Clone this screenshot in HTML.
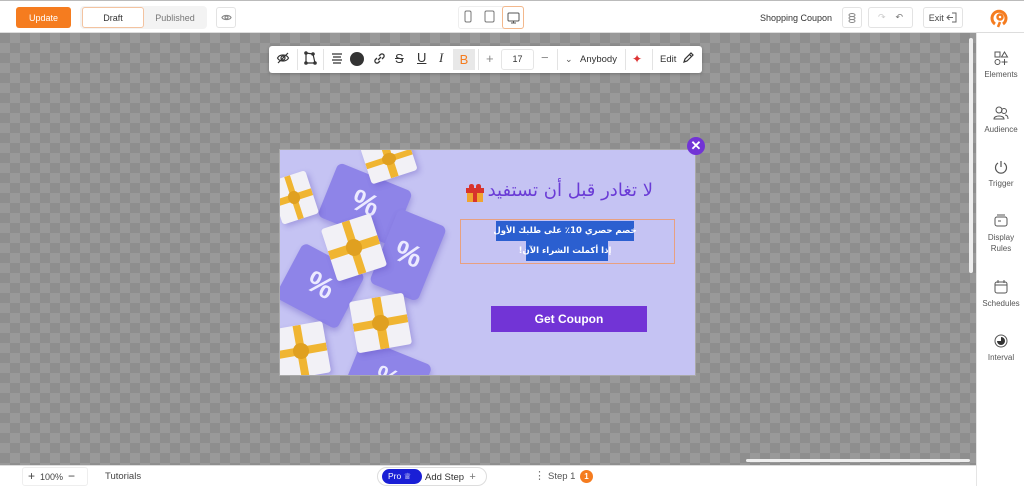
<!DOCTYPE html>
<html><head><meta charset="utf-8">
<style>
*{box-sizing:border-box;margin:0;padding:0}
body{width:1024px;height:486px;overflow:hidden;font-family:"Liberation Sans","Noto Sans CJK SC",sans-serif;background:#fff;position:relative;color:#333}
.abs{position:absolute}
.top{left:0;top:0;width:1024px;height:33px;background:#fff;border-top:1px solid #bbb;border-bottom:1px solid #ddd}
.btn{position:absolute;font-size:9px;display:flex;align-items:center;justify-content:center}
.canvas{left:0;top:33px;width:976px;height:432px;background-color:#8e8e8e;
background-image:linear-gradient(45deg,#999 25%,transparent 25%,transparent 75%,#999 75%),linear-gradient(45deg,#999 25%,transparent 25%,transparent 75%,#999 75%);
background-size:20px 20px;background-position:0 0,10px 10px}
.side{left:976px;top:33px;width:48px;height:453px;background:#fff;border-left:1px solid #e5e5e5}
.si{position:absolute;left:0;width:48px;text-align:center;font-size:8px;color:#555;line-height:11px}
.bot{left:0;top:465px;width:976px;height:21px;background:#fff;border-top:1px solid #ddd}
.tb{left:269px;top:46px;width:433px;height:27px;background:#fff;border-radius:3px;box-shadow:0 1px 3px rgba(0,0,0,.25)}
.sep{position:absolute;top:3px;width:1px;height:21px;background:#e3e3e3}
.ti{position:absolute;top:6px;font-size:11px;color:#333}
.pop{left:279px;top:149px;width:417px;height:227px;background:#c5c3f3;overflow:hidden;border:1px solid #aaa}
.cp{position:absolute;background:#8e84e8;border-radius:6px;color:#eceaff;font-weight:bold;display:flex;align-items:center;justify-content:center;box-shadow:2px 3px 6px rgba(80,60,180,.3)}
.gf{position:absolute;background:#f2f1f6;border-radius:3px;box-shadow:2px 3px 6px rgba(80,60,180,.3);overflow:hidden}
.gf:before{content:"";position:absolute;left:42%;top:0;width:16%;height:100%;background:#f0b532}
.gf:after{content:"";position:absolute;top:42%;left:0;height:16%;width:100%;background:#f0b532}
.gf i{position:absolute;left:35%;top:35%;width:30%;height:30%;background:#e0a020;border-radius:50%;z-index:2}
</style></head><body>
<div class="abs top">
  <div class="btn" style="left:16px;top:6px;width:55px;height:21px;background:#f57c1f;color:#fff;border-radius:3px">Update</div>
  <div class="btn" style="left:80px;top:5px;width:127px;height:23px;background:#f3f3f3;border-radius:4px"></div>
  <div class="btn" style="left:82px;top:6px;width:62px;height:21px;background:#fff;border:1px solid #f3c3a0;border-radius:3px;color:#333">Draft</div>
  <div class="btn" style="left:145px;top:6px;width:60px;height:21px;color:#777">Published</div>
  <div class="btn" style="left:216px;top:6px;width:20px;height:21px;border:1px solid #e3e3e3;border-radius:3px"><svg width="11" height="11" viewBox="0 0 12 12" fill="none" stroke="#888" stroke-width="1.2"><path d="M1 6c1.5-3 8.5-3 10 0c-1.5 3-8.5 3-10 0z"/><circle cx="6" cy="6" r="1.6"/></svg></div>
  <div class="btn" style="left:458px;top:5px;width:66px;height:23px;border:1px solid #eee;border-radius:3px"></div>
  <div class="btn" style="left:463px;top:8px;width:10px;height:15px"><svg width="8" height="13"><rect x="1" y="1" width="6" height="11" rx="1.5" fill="none" stroke="#777"/></svg></div>
  <div class="btn" style="left:483px;top:8px;width:12px;height:15px"><svg width="11" height="13"><rect x="1" y="1" width="9" height="11" rx="1.5" fill="none" stroke="#777"/></svg></div>
  <div class="btn" style="left:502px;top:5px;width:22px;height:23px;border:1px solid #f3b88c;border-radius:3px"><svg width="13" height="12"><rect x="1" y="1" width="11" height="8" rx="1" fill="none" stroke="#555"/><path d="M6.5 9v2M4 11h5" stroke="#555"/></svg></div>
  <div class="btn" style="left:756px;top:6px;width:80px;height:21px;color:#333">Shopping Coupon</div>
  <div class="btn" style="left:842px;top:6px;width:20px;height:21px;border:1px solid #e3e3e3;border-radius:3px"><svg width="10" height="12" fill="none" stroke="#888"><ellipse cx="5" cy="3" rx="3" ry="1.5"/><ellipse cx="5" cy="6" rx="3" ry="1.5"/><ellipse cx="5" cy="9" rx="3" ry="1.5"/></svg></div>
  <div class="btn" style="left:868px;top:6px;width:45px;height:21px;border:1px solid #e3e3e3;border-radius:3px"><span style="color:#ccc;margin-right:10px">↷</span><span style="color:#777">↶</span></div>
  <div class="btn" style="left:923px;top:6px;width:40px;height:21px;border:1px solid #e3e3e3;border-radius:3px;color:#444">Exit&nbsp;<svg width="11" height="11" fill="none" stroke="#666"><path d="M6 1h4v9H6M1 5.5h6M3.5 3L1 5.5 3.5 8"/></svg></div>
  <div class="btn" style="left:988px;top:5px;width:24px;height:24px"><svg width="22" height="22" viewBox="0 0 22 22" fill="none" stroke="#f57c1f" stroke-width="3"><path d="M6 17A7 7 0 1 1 14 17"/><circle cx="11" cy="10" r="2.5" stroke-width="2.5"/><path d="M9 20l2-5" stroke-width="2.5"/></svg></div>
</div>

<div class="abs canvas"></div>
<div class="abs" style="left:969px;top:38px;width:4px;height:235px;background:#eee;border-radius:2px"></div>
<div class="abs" style="left:746px;top:459px;width:224px;height:3px;background:#eee;border-radius:2px"></div>

<div class="abs tb">
  <div class="ti" style="left:7px;top:5px"><svg width="14" height="14" fill="none" stroke="#333" stroke-width="1.2"><path d="M1.5 7c2-4 9-4 11 0c-2 4-9 4-11 0z"/><circle cx="7" cy="7" r="2"/><path d="M2 12L12 2"/></svg></div>
  <div class="sep" style="left:28px"></div>
  <div class="ti" style="left:34px;top:5px"><svg width="14" height="14" fill="none" stroke="#333" stroke-width="1.2"><path d="M3 2l7 1 2 9-9 0z"/><circle cx="3" cy="2" r="1.2"/><circle cx="10" cy="3" r="1.2"/><circle cx="12" cy="12" r="1.2"/><circle cx="3" cy="12" r="1.2"/></svg></div>
  <div class="sep" style="left:54px"></div>
  <div class="ti" style="left:62px;top:6px"><svg width="12" height="12" stroke="#333" stroke-width="1.2"><path d="M1 2h10M2 5h8M1 8h10M2 11h8"/></svg></div>
  <div class="ti" style="left:81px;top:6px;width:14px;height:14px;border-radius:50%;background:#333"></div>
  <div class="ti" style="left:105px;top:7px"><svg width="11" height="11" fill="none" stroke="#333" stroke-width="1.3"><path d="M5 3l1.5-1.5a2 2 0 0 1 3 3L8 6M6 8L4.5 9.5a2 2 0 0 1-3-3L3 5M4 7l3-3"/></svg></div>
  <div class="ti" style="left:126px;top:5px;font-size:13px;text-decoration:line-through">S</div>
  <div class="ti" style="left:148px;top:4px;font-size:13px;text-decoration:underline">U</div>
  <div class="ti" style="left:170px;top:4px;font-size:13px;font-style:italic;font-family:'Liberation Serif',serif">I</div>
  <div class="ti" style="left:184px;top:3px;width:22px;height:21px;background:#e8e8e8;color:#f57c1f;font-size:13px;text-align:center;line-height:21px;top:3px">B</div>
  <div class="sep" style="left:209px"></div>
  <div class="ti" style="left:217px;top:5px;color:#888;font-size:13px">+</div>
  <div class="ti" style="left:232px;top:3px;width:33px;height:21px;border:1px solid #e5e5e5;border-radius:3px;text-align:center;line-height:19px;font-size:9px">17</div>
  <div class="ti" style="left:272px;top:4px;color:#888;font-size:13px">−</div>
  <div class="sep" style="left:288px"></div>
  <div class="ti" style="left:296px;top:8px;font-size:9px;color:#555">⌄</div>
  <div class="ti" style="left:311px;top:8px;font-size:9.5px">Anybody</div>
  <div class="sep" style="left:356px"></div>
  <div class="ti" style="left:363px;top:6px;color:#d33;font-size:12px">✦</div>
  <div class="sep" style="left:383px"></div>
  <div class="ti" style="left:391px;top:8px;font-size:9.5px">Edit</div>
  <div class="ti" style="left:413px;top:6px"><svg width="12" height="12" fill="none" stroke="#333" stroke-width="1.2"><path d="M2 10l1-3 6-6 2 2-6 6zM7.5 2.5l2 2"/></svg></div>
</div>

<div class="abs pop">
  <div class="cp" style="left:45px;top:25px;width:80px;height:58px;transform:rotate(22deg);font-size:30px">%</div>
  <div class="cp" style="left:102px;top:65px;width:52px;height:80px;transform:rotate(22deg);font-size:30px">%</div>
  <div class="cp" style="left:5px;top:105px;width:70px;height:62px;transform:rotate(28deg);font-size:30px">%</div>
  <div class="cp" style="left:70px;top:200px;width:75px;height:55px;transform:rotate(22deg);font-size:26px">%</div>
  <div class="gf" style="left:-5px;top:25px;width:38px;height:45px;transform:rotate(-18deg)"><i></i></div>
  <div class="gf" style="left:85px;top:-10px;width:48px;height:38px;transform:rotate(-18deg)"><i></i></div>
  <div class="gf" style="left:48px;top:70px;width:52px;height:55px;transform:rotate(-18deg)"><i></i></div>
  <div class="gf" style="left:73px;top:147px;width:55px;height:52px;transform:rotate(-10deg)"><i></i></div>
  <div class="gf" style="left:-5px;top:175px;width:52px;height:52px;transform:rotate(-10deg)"><i></i></div>
  <div class="abs" style="left:186px;top:34px;width:18px;height:18px">
    <div class="abs" style="left:0;top:4px;width:18px;height:5px;background:#d8342c"></div>
    <div class="abs" style="left:1px;top:9px;width:16px;height:9px;background:#f0a530"></div>
    <div class="abs" style="left:7px;top:4px;width:4px;height:14px;background:#d8342c"></div>
    <div class="abs" style="left:3px;top:0;width:5px;height:4px;border:2px solid #d8342c;border-radius:50% 50% 0 0"></div>
    <div class="abs" style="left:10px;top:0;width:5px;height:4px;border:2px solid #d8342c;border-radius:50% 50% 0 0"></div>
  </div>
  <div class="abs" style="left:150px;top:30px;width:223px;font-size:18px;color:#6a3bd6;direction:rtl;text-align:right;white-space:nowrap;font-family:'DejaVu Sans',sans-serif">لا تغادر قبل أن تستفيد</div>
  <div class="abs" style="left:180px;top:69px;width:215px;height:45px;border:1px solid #e8a080"></div>
  <div class="abs" style="left:216px;top:71px;width:138px;height:20px;background:#2b5fd0"></div>
  <div class="abs" style="left:246px;top:91px;width:82px;height:20px;background:#2b5fd0"></div>
  <div class="abs" style="left:180px;top:71px;width:210px;text-align:center;color:#fff;font-size:8.5px;font-weight:bold;direction:rtl;line-height:20px;white-space:nowrap;font-family:'DejaVu Sans',sans-serif">خصم حصري 10٪ على طلبك الأول<br>إذا أكملت الشراء الآن!</div>
  <div class="abs" style="left:211px;top:156px;width:156px;height:26px;background:#7234d6;color:#fff;font-size:12px;font-weight:bold;text-align:center;line-height:26px">Get Coupon</div>
</div>
<div class="abs" style="left:687px;top:137px;width:18px;height:18px;border-radius:50%;background:#7234d6;color:#fff;text-align:center;line-height:18px;font-size:13px;font-weight:bold">✕</div>

<div class="abs side">
  <div class="si" style="top:17px"><svg width="16" height="16" fill="none" stroke="#555"><rect x="2" y="2" width="5" height="5"/><path d="M11.5 2l3 5h-6z"/><circle cx="4.5" cy="12" r="2.5"/><path d="M11.5 9v6M8.5 12h6"/></svg><br>Elements</div>
  <div class="si" style="top:72px"><svg width="16" height="16" fill="none" stroke="#555"><circle cx="6" cy="5" r="3"/><circle cx="11" cy="6" r="2.5"/><path d="M1 14c0-4 10-4 10 0zM12 10c2 0 3 1.5 3 4"/></svg><br>Audience</div>
  <div class="si" style="top:126px"><svg width="16" height="16" fill="none" stroke="#555" stroke-width="1.2"><path d="M5 4a5.5 5.5 0 1 0 6 0M8 2v6"/></svg><br>Trigger</div>
  <div class="si" style="top:180px"><svg width="16" height="16" fill="none" stroke="#555"><rect x="2" y="4" width="12" height="9" rx="2"/><path d="M4 2h8M5 8h3"/></svg><br>Display<br>Rules</div>
  <div class="si" style="top:246px"><svg width="16" height="16" fill="none" stroke="#555"><rect x="2" y="3" width="12" height="11" rx="2"/><path d="M2 6h12M5 1v3M11 1v3"/></svg><br>Schedules</div>
  <div class="si" style="top:300px"><svg width="16" height="16"><circle cx="8" cy="8" r="6" fill="none" stroke="#555"/><path d="M8 4a4 4 0 1 1-4 4h4z" fill="#333"/></svg><br>Interval</div>
</div>

<div class="abs bot">
  <div class="abs" style="left:22px;top:1px;width:66px;height:19px;border:1px solid #eee;border-radius:3px;font-size:9px;line-height:17px;padding-left:5px;color:#444"><span style="font-size:12px">+</span>&nbsp; 100% &nbsp;<span style="font-size:12px">−</span></div>
  <div class="abs" style="left:105px;top:5px;font-size:9.5px;color:#444">Tutorials</div>
  <div class="abs" style="left:377px;top:1px;width:110px;height:19px;border:1px solid #ddd;border-radius:10px"></div>
  <div class="abs" style="left:382px;top:3px;width:40px;height:15px;border-radius:8px;background:#1a1fd6;color:#fff;font-size:8.5px;line-height:15px;padding-left:6px">Pro ♕</div>
  <div class="abs" style="left:425px;top:5px;font-size:9.5px;color:#333">Add Step &nbsp;<span style="font-size:11px;color:#777">+</span></div>
  <div class="abs" style="left:534px;top:3px;font-size:11px;color:#777">⋮</div>
  <div class="abs" style="left:548px;top:5px;font-size:9.5px;color:#555">Step 1</div>
  <div class="abs" style="left:580px;top:4px;width:13px;height:13px;border-radius:50%;background:#f57c1f;color:#fff;font-size:8px;text-align:center;line-height:13px;font-weight:bold">1</div>
</div>
</body></html>
